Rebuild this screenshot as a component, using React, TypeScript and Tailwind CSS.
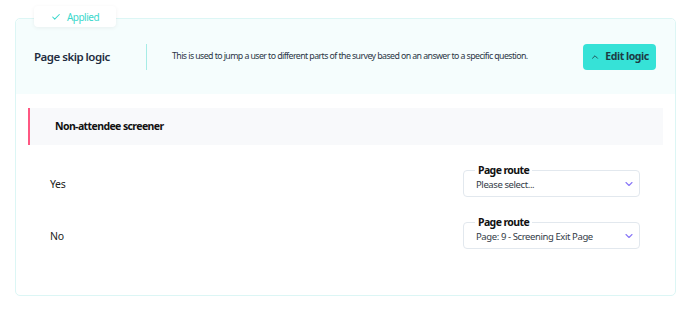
import { Check, ChevronUp, ChevronDown } from "lucide-react";

const routes = [
  { answer: "Yes", value: "Please select..." },
  { answer: "No", value: "Page: 9 - Screening Exit Page" },
];

function RouteSelect({ value }: { value: string }) {
  return (
    <div className="relative flex h-[27px] w-[177px] items-center justify-between rounded-[4px] border border-[#e2e8ee] pl-[12px] pr-[4px]">
      <span className="absolute -top-[8px] left-[11px] bg-white px-[3px] text-[10.5px] font-bold leading-[14px] tracking-[-0.6px] text-[#111]">
        Page route
      </span>
      <span className="mt-[2px] text-[9.5px] leading-[14px] tracking-[-0.4px] text-[#333c47]">{value}</span>
      <ChevronDown className="mt-[1px] h-[12px] w-[12px] text-[#8a78f7]" strokeWidth={2.25} />
    </div>
  );
}

export default function App() {
  return (
    <div className="h-[315px] w-[688px] bg-white pl-[15px] pt-[18px] font-['Noto_Sans',sans-serif]">
      <div className="relative h-[278px] w-[661px] rounded-[5px] border border-[#dcf6f5]">
        <div className="absolute -top-[13px] left-[18px] flex h-[21px] w-[82px] items-center justify-center gap-[6px] rounded-[4px] bg-white shadow-[0_1px_4px_rgba(0,0,0,0.06)]">
          <Check className="h-[10px] w-[10px] text-[#3ad8cc]" strokeWidth={2.5} />
          <span className="text-[10px] leading-none tracking-[-0.5px] text-[#3ad8cc]">Applied</span>
        </div>

        <div className="flex h-[75px] items-center rounded-t-[5px] bg-[#f5fdfd] pl-[18px] pr-[19px]">
          <h2 className="w-[112px] text-[11.5px] font-semibold tracking-[-0.5px] text-[#1f2d3f]">Page skip logic</h2>
          <div className="h-[26px] w-px bg-[#a6ece6]" />
          <p className="ml-[25px] flex-1 text-[8.8px] tracking-[-0.58px] text-[#2b3645]">
            This is used to jump a user to different parts of the survey based on an answer to a specific question.
          </p>
          <button className="flex h-[26px] w-[73px] items-center justify-center gap-[5px] rounded-[4px] bg-[#36e2d7] text-[10.5px] font-bold tracking-[-0.45px] text-[#1d3b44]">
            <ChevronUp className="h-[10px] w-[10px]" strokeWidth={2} />
            Edit logic
          </button>
        </div>

        <div className="mx-[12px] mt-[14px] flex h-[37px] items-center border-l-2 border-[#ff5782] bg-[#f8f9fb] pl-[25px]">
          <span className="text-[10.5px] font-bold tracking-[-0.6px] text-[#111]">Non-attendee screener</span>
        </div>

        <div className="mt-[25px] flex flex-col gap-[25px] pl-[34px] pr-[35px]">
          {routes.map((r) => (
            <div key={r.answer} className="flex items-center justify-between">
              <span className="mt-[2px] text-[10.5px] tracking-[-0.3px] text-[#222]">{r.answer}</span>
              <RouteSelect value={r.value} />
            </div>
          ))}
        </div>
      </div>
    </div>
  );
}
